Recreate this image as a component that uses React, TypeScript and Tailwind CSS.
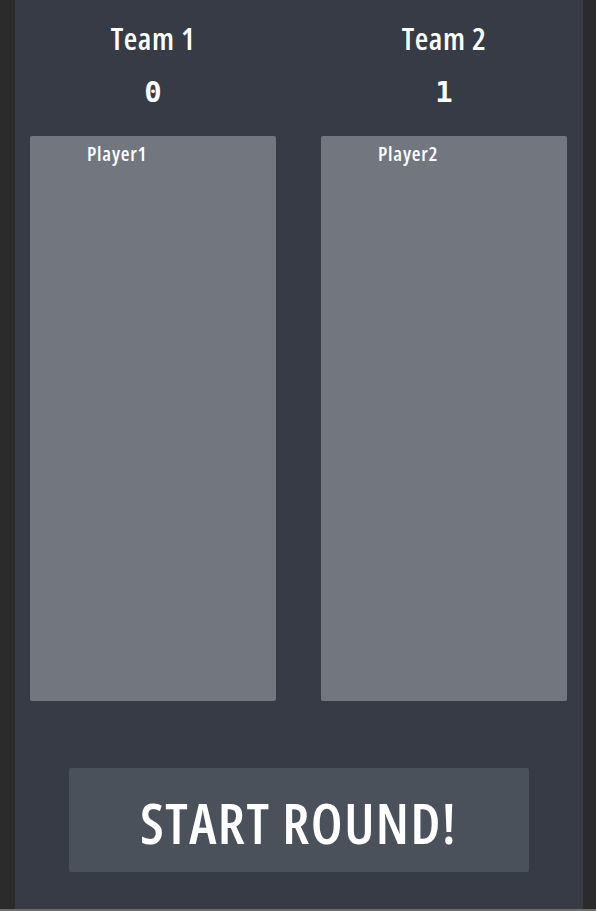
import React from "react";

const teams = [
  { name: "Team 1", score: "0", player: "Player1" },
  { name: "Team 2", score: "1", player: "Player2" },
];

export default function App() {
  return (
    <div className="flex h-[911px] w-[596px] flex-col bg-[#2b2b2b]" style={{ fontFamily: '"Open Sans", "Noto Sans", sans-serif' }}>
      <div className="flex flex-1 pl-[15px] pr-[13px]">
        <div className="flex flex-1 flex-col bg-[#363b46] pl-[15px] pr-[16px]">
          <div className="grid grid-cols-2 gap-x-[45px]">
            {teams.map((t) => (
              <div key={t.name} className="flex flex-col">
                <div className="mt-[18px] flex h-[40px] items-center justify-center text-[31px] font-semibold text-white [font-stretch:75%] tracking-[0.6px]">
                  {t.name}
                </div>
                <div className="mt-[20px] flex h-[30px] items-center justify-center text-[29px] font-bold text-white" style={{ fontFamily: '"DejaVu Sans Mono", monospace' }}>
                  {t.score}
                </div>
                <div className="mt-[28px] h-[565px] rounded-[2px] bg-[#72767e] pl-[57px] pt-[6px]">
                  <div className="text-[20px] font-semibold leading-[24px] text-white [font-stretch:75%] tracking-[0.8px]">{t.player}</div>
                </div>
              </div>
            ))}
          </div>
          <div className="mt-[67px] flex justify-center">
            <button className="flex h-[104px] w-[460px] items-center justify-center rounded-[2px] bg-[#4b515b] pt-[4px] text-[56px] font-semibold text-white [font-stretch:75%] tracking-[1.5px]">
              START ROUND!
            </button>
          </div>
        </div>
      </div>
      <div className="h-[2px] bg-[#6e6e6e]" />
    </div>
  );
}
